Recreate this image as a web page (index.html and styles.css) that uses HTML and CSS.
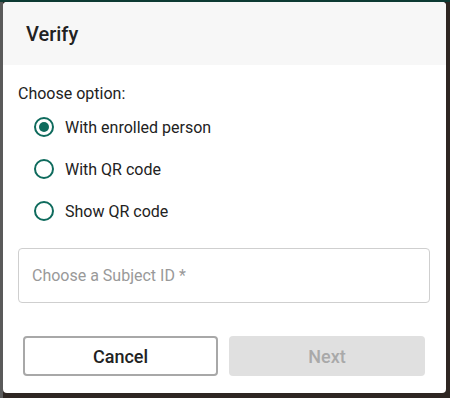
FILE: index.html
```html
<!DOCTYPE html>
<html lang="en">
<head>
<meta charset="utf-8">
<title>Verify</title>
<link rel="stylesheet" href="styles.css">
</head>
<body>
<div class="backdrop">
  <div class="dialog">
    <div class="dialog-header">Verify</div>
    <div class="dialog-body">
      <div class="group-label">Choose option:</div>
      <div class="radio-list">
        <label class="radio-row"><span class="radio checked"></span><span class="radio-text">With enrolled person</span></label>
        <label class="radio-row"><span class="radio"></span><span class="radio-text">With QR code</span></label>
        <label class="radio-row"><span class="radio"></span><span class="radio-text">Show QR code</span></label>
      </div>
      <div class="field">Choose a Subject ID *</div>
    </div>
    <div class="dialog-actions">
      <button class="btn btn-cancel">Cancel</button>
      <button class="btn btn-next" disabled>Next</button>
    </div>
  </div>
</div>
</body>
</html>
```
FILE: styles.css
```css
html, body {
  margin: 0;
  padding: 0;
}
body {
  width: 450px;
  height: 398px;
  overflow: hidden;
  background: linear-gradient(90deg, #5a5a5a 0 3px, #2e2622 3px);
  font-family: Roboto, "Noto Sans", "Liberation Sans", sans-serif;
  color: #222;
}
.backdrop {
  padding: 2px 4px 5px 3px;
  background: linear-gradient(180deg, #0d3a33 0 2px, transparent 2px);
}
.dialog {
  width: 443px;
  height: 391px;
  background: #fff;
  border-radius: 4px;
  overflow: hidden;
  display: flex;
  flex-direction: column;
}
.dialog-header {
  height: 63px;
  background: #f7f7f7;
  padding-left: 23px;
  display: flex;
  align-items: center;
  font-size: 20px;
  font-weight: 500;
  color: #222;
}
.dialog-body {
  padding: 17px 16px 0 15px;
}
.group-label {
  font-size: 16px;
  line-height: 24px;
  color: #222;
}
.radio-list {
  display: flex;
  flex-direction: column;
  padding-left: 16px;
}
.radio-row {
  height: 42px;
  display: flex;
  align-items: center;
  gap: 11px;
  font-size: 16px;
  color: #222;
}
.radio {
  box-sizing: border-box;
  width: 20px;
  height: 20px;
  border: 2px solid #0f6b5d;
  border-radius: 50%;
  display: flex;
  align-items: center;
  justify-content: center;
  flex: none;
}
.radio.checked::after {
  content: "";
  width: 10px;
  height: 10px;
  border-radius: 50%;
  background: #0f6b5d;
}
.field {
  box-sizing: border-box;
  margin-top: 16px;
  height: 55px;
  border: 1px solid #cfcfcf;
  border-radius: 4px;
  padding-left: 13px;
  display: flex;
  align-items: center;
  font-size: 16px;
  color: #999;
}
.dialog-actions {
  margin-top: 33px;
  padding: 0 21px 0 20px;
  display: flex;
  gap: 11px;
}
.btn {
  box-sizing: border-box;
  flex: none;
  height: 40px;
  border-radius: 4px;
  font-family: Roboto, "Noto Sans", "Liberation Sans", sans-serif;
  font-size: 18px;
  font-weight: 500;
}
.btn-cancel {
  width: 195px;
  background: #fff;
  border: 2px solid #a8a8a8;
  color: #222;
}
.btn-next {
  width: 196px;
  background: #e0e0e0;
  border: none;
  color: #a9a9a9;
}
```
